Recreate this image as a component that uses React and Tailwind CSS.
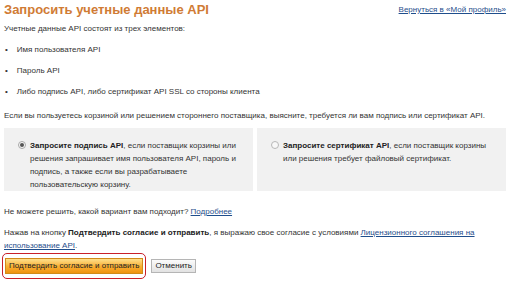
export default function App() {
    return (
        <div className="w-[514px] h-[290px] overflow-hidden bg-white px-[4px] pt-[2px] text-[8px] leading-[10px] text-[#333] [font-family:'Liberation_Sans',Arial,sans-serif]">
            <div className="flex items-start justify-between">
                <h1 className="text-[13px] leading-[16px] font-bold text-[#d07b35]">Запросить учетные данные API</h1>
                <a href="#" className="mt-[3px] mr-[4px] text-[#1f4e8c] underline">Вернуться в «Мой профиль»</a>
            </div>
            <p className="mt-[6px]">Учетные данные API состоят из трех элементов:</p>
            <ul className="mt-[11px] flex flex-col gap-[11px]">
                <li className="flex gap-[9px]"><span className="pl-[1px]">•</span>Имя пользователя API</li>
                <li className="flex gap-[9px]"><span className="pl-[1px]">•</span>Пароль API</li>
                <li className="flex gap-[9px]"><span className="pl-[1px]">•</span>Либо подпись API, либо сертификат API SSL со стороны клиента</li>
            </ul>
            <p className="mt-[14px]">Если вы пользуетесь корзиной или решением стороннего поставщика, выясните, требуется ли вам подпись или сертификат API.</p>
            <div className="mt-[7px] mr-[4px] grid grid-cols-2 gap-[4px]">
                <label className="flex h-[63px] gap-[4px] bg-[#f1f1f1] pl-[14px] pr-[14px] pt-[11px] leading-[13px]">
                    <span className="mt-[2px] flex h-[8px] w-[8px] shrink-0 items-center justify-center rounded-full border border-[#a8a8a8] bg-[#f8f8f8]">
                        <span className="h-[4px] w-[4px] rounded-full bg-[#555]" />
                    </span>
                    <span><b className="text-[#222]">Запросите подпись API</b>, если поставщик корзины или решения запрашивает имя пользователя API, пароль и подпись, а также если вы разрабатываете пользовательскую корзину.</span>
                </label>
                <label className="flex h-[63px] gap-[4px] bg-[#f1f1f1] pl-[14px] pr-[14px] pt-[11px] leading-[13px]">
                    <span className="mt-[2px] h-[8px] w-[8px] shrink-0 rounded-full border border-[#b8b8b8] bg-[#f8f8f8]" />
                    <span><b className="text-[#222]">Запросите сертификат API</b>, если поставщик корзины или решения требует файловый сертификат.</span>
                </label>
            </div>
            <p className="mt-[16px]">Не можете решить, какой вариант вам подходит? <a href="#" className="text-[#1f4e8c] underline">Подробнее</a></p>
            <p className="mt-[9px] leading-[13px]">Нажав на кнопку <b className="text-[#222]">Подтвердить согласие и отправить</b>, я выражаю свое согласие с условиями <a href="#" className="text-[#1f4e8c] underline">Лицензионного соглашения на использование API</a>.</p>
            <div className="mt-[1px] -ml-[2px] flex items-center gap-[5px]">
                <div className="rounded-[5px] border border-[#c8202a] px-[3px] py-[5px]">
                    <button className="h-[14px] bg-gradient-to-b from-[#fde08a] via-[#f9b233] to-[#f0920c] px-[3px] text-[8px] leading-[12px] text-[#222] shadow-[0_0_0_1px_#d08a1a]">Подтвердить согласие и отправить</button>
                </div>
                <button className="h-[14px] border border-[#b5b5b5] bg-gradient-to-b from-[#fbfbfb] to-[#e2e2e2] px-[3px] text-[8px] leading-[12px] text-[#222]">Отменить</button>
            </div>
        </div>
    );
}
